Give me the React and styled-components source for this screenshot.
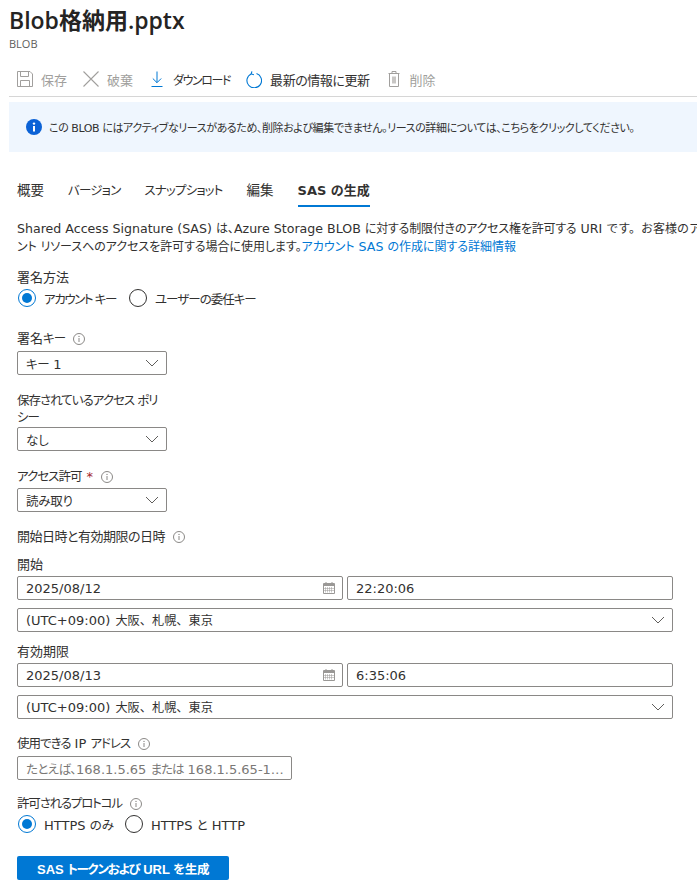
import React from "react";
import styled, { createGlobalStyle } from "styled-components";

const GlobalStyle = createGlobalStyle`
  html, body {
    margin: 0;
    padding: 0;
    background: #fff;
    overflow: hidden;
  }
  body {
    font-family: "DejaVu Sans", "Noto Sans CJK JP", sans-serif;
    font-size: 13px;
    font-feature-settings: "palt";
    color: #323130;
  }
`;

const Page = styled.div`
  width: 697px;
  height: 890px;
  overflow: hidden;
`;

const Header = styled.header`
  padding: 3px 0 0 9px;
`;

const Title = styled.h1`
  margin: 0;
  font-family: "Open Sans", "Noto Sans CJK JP", sans-serif;
  font-size: 23px;
  font-weight: 600;
  line-height: 35px;
  color: #252423;
`;

const Subtitle = styled.div`
  font-family: "Open Sans", sans-serif;
  font-size: 11px;
  line-height: 12px;
  color: #605e5c;
`;

// narrow kana, the reference's UI font sets them much tighter than Noto
const Kana = styled.span`
  font-size: ${({ $size }) => $size || 12.5}px;
  letter-spacing: ${({ $s }) => ($s === undefined ? -1 : $s)}px;
  font-feature-settings: ${({ $full }) => ($full ? "normal" : "inherit")};
`;

const Toolbar = styled.div`
  box-sizing: border-box;
  display: flex;
  align-items: center;
  gap: 16px;
  height: 43px;
  margin: 4px 0 0 9px;
  padding: 8px 0 0 8px;
  border-bottom: 1px solid #d6d6d6;
`;

const ToolItem = styled.div`
  display: flex;
  align-items: center;
  gap: 8px;
  white-space: nowrap;
  font-size: 13px;
  letter-spacing: ${({ $s }) => $s || 0}px;
  color: ${({ $off }) => ($off ? "#a19f9d" : "#323130")};
  svg {
    display: block;
    flex: none;
  }
`;

const Banner = styled.div`
  display: flex;
  align-items: center;
  gap: 7px;
  height: 50px;
  margin: 5px 0 0 9px;
  padding-left: 17px;
  background: #eff6fe;
  font-size: 11px;
  letter-spacing: -0.42px;
  white-space: nowrap;
`;

const Tabs = styled.nav`
  display: flex;
  gap: 24px;
  margin: 28px 0 0 17px;
`;

const Tab = styled.div`
  height: 25px;
  line-height: 21px;
  font-size: ${({ $active }) => ($active ? 13 : 13.5)}px;
  font-weight: ${({ $active }) => ($active ? 700 : 400)};
  border-bottom: ${({ $active }) => ($active ? "2px solid #0078d4" : "2px solid transparent")};
`;

const Form = styled.main`
  padding-left: 17px;
`;

const Description = styled.p`
  height: 34px;
  margin: 13px 0 0;
  font-size: 12.6px;
  line-height: 17px;
  white-space: nowrap;
`;

const DocLink = styled.a`
  color: #0078d4;
  text-decoration: none;
`;

const Label = styled.div`
  display: flex;
  align-items: center;
  gap: 8px;
  margin-top: ${({ $top }) => $top}px;
  min-height: 17px;
  font-size: 13px;
  line-height: 17px;
  letter-spacing: ${({ $s }) => $s || 0}px;
`;

const LabelText = styled.span`
  white-space: pre-wrap;
`;

const Required = styled.span`
  color: #a4262c;
  margin-left: -3px;
`;

const RadioRow = styled.div`
  display: flex;
  align-items: center;
  gap: ${({ $gap }) => $gap || 12}px;
  height: 20px;
  margin-top: 2px;
`;

const RadioOption = styled.div`
  display: flex;
  align-items: center;
  gap: 8px;
  font-size: 13px;
  white-space: nowrap;
`;

const RadioMark = styled.span`
  box-sizing: border-box;
  flex: none;
  display: flex;
  align-items: center;
  justify-content: center;
  width: 18px;
  height: 18px;
  margin-left: 1px;
  border-radius: 50%;
  border: 1px solid ${({ $on }) => ($on ? "#0078d4" : "#323130")};
  &::after {
    content: "";
    display: ${({ $on }) => ($on ? "block" : "none")};
    width: 10px;
    height: 10px;
    border-radius: 50%;
    background: #0078d4;
  }
`;

const Box = styled.div`
  box-sizing: border-box;
  display: flex;
  align-items: center;
  justify-content: space-between;
  width: ${({ $w }) => ($w ? `${$w}px` : "656px")};
  flex: ${({ $grow }) => ($grow ? 1 : "none")};
  height: 24px;
  margin-top: ${({ $top }) => $top || 0}px;
  padding: 0 7px 0 8px;
  border: 1px solid #8a8886;
  border-radius: 2px;
  background: #fff;
  font-size: 13px;
  white-space: nowrap;
  color: ${({ $hint }) => ($hint ? "#7a7876" : "#323130")};
`;

const BoxText = styled.span`
  overflow: hidden;
  text-overflow: ellipsis;
`;

const ZoneName = styled.span`
  font-size: 12.2px;
  margin-left: 1px;
  font-feature-settings: normal;
`;

const DateRow = styled.div`
  display: flex;
  gap: 4px;
  width: 656px;
  margin-top: 3px;
`;

const PrimaryButton = styled.button`
  display: block;
  width: 212px;
  height: 24px;
  margin-top: 22px;
  padding: 0;
  border: 0;
  border-radius: 2px;
  background: #0078d4;
  color: #fff;
  font-family: "Liberation Sans", "Noto Sans CJK JP", sans-serif;
  font-feature-settings: "palt";
  font-size: 13px;
  font-weight: 700;
`;

const Chevron = () => (
  <svg width="14" height="8" viewBox="0 0 14 8" fill="none" stroke="#605e5c" strokeWidth="1">
    <path d="M1 1l6 6 6-6" />
  </svg>
);

const InfoHint = () => (
  <svg width="12" height="12" viewBox="0 0 12 12" fill="none">
    <circle cx="6" cy="6" r="5.5" stroke="#8a8886" />
    <path d="M6 5v4" stroke="#8a8886" />
    <circle cx="6" cy="3.4" r=".7" fill="#8a8886" />
  </svg>
);

const CalendarIcon = () => (
  <svg width="12" height="12" viewBox="0 0 12 12" fill="none" stroke="#9a9896">
    <path d="M.5 1.5h11v10H.5z" />
    <path d="M.5 2.5h11M.5 3.5h11" />
    <path d="M2.5 5v5.5M4.5 5v5.5M6.5 5v5.5M8.5 5v5.5M1 6.5h10M1 8.5h10" strokeOpacity=".5" />
    <path d="M3 0v2M9 0v2" />
  </svg>
);

const SaveIcon = () => (
  <svg width="16" height="16" viewBox="0 0 16 16" fill="none" stroke="#a19f9d">
    <path d="M.5.5h12.5l2.5 2.5v12.5H.5z" />
    <path d="M3.5.5v5h8v-5M3.5 15.5V9.5h9v6" />
  </svg>
);

const DiscardIcon = () => (
  <svg width="16" height="16" viewBox="0 0 16 16" fill="none" stroke="#a19f9d" strokeWidth="1.1">
    <path d="M.5.5l15 15M15.5.5l-15 15" />
  </svg>
);

const DownloadIcon = () => (
  <svg width="16" height="16" viewBox="0 0 16 16" fill="none" stroke="#0078d4">
    <path d="M8 .5v11M3.8 7.5L8 11.7l4.2-4.2M2.5 15.5h11" />
  </svg>
);

const RefreshIcon = () => (
  <svg width="16" height="17" viewBox="0 0 16 17" fill="none" stroke="#0078d4" strokeWidth="1.1">
    <path d="M5.2 2.9A7.3 7.3 0 1 0 10.5 2.6" />
    <path d="M5.9 .4L5.2 3l2.7.8" />
  </svg>
);

const TrashIcon = () => (
  <svg width="16" height="16" viewBox="0 0 16 16" fill="none" stroke="#a19f9d">
    <path d="M2.5 2.5h11M6 2.5V.5h4v2M3.5 2.5v13h9v-13" />
    <path d="M6 5.5h4v7H6z" fill="#c8c6c4" stroke="none" />
  </svg>
);

const BannerIcon = () => (
  <svg width="16" height="16" viewBox="0 0 16 16" style={{ flex: "none" }}>
    <circle cx="8" cy="8" r="8" fill="#0b62d6" />
    <rect x="7" y="7" width="2" height="5.5" fill="#fff" />
    <circle cx="8" cy="4.6" r="1.2" fill="#fff" />
  </svg>
);

const Select = ({ w, top, children }) => (
  <Box $w={w} $top={top}>
    <BoxText>{children}</BoxText>
    <Chevron />
  </Box>
);

const Radio = ({ on, children }) => (
  <RadioOption>
    <RadioMark $on={on} />
    <LabelText>{children}</LabelText>
  </RadioOption>
);

const DateBlock = ({ label, top, date, time }) => (
  <>
    <Label $top={top}>{label}</Label>
    <DateRow>
      <Box $grow>
        <BoxText>{date}</BoxText>
        <CalendarIcon />
      </Box>
      <Box $w={326}>
        <BoxText>{time}</BoxText>
      </Box>
    </DateRow>
    <Select top={8}>(UTC+09:00) <ZoneName>大阪、札幌、東京</ZoneName></Select>
  </>
);

export default function App() {
  return (
    <Page>
      <GlobalStyle />
      <Header>
        <Title>Blob格納用.pptx</Title>
        <Subtitle>BLOB</Subtitle>
      </Header>
      <Toolbar>
        <ToolItem $off><SaveIcon />保存</ToolItem>
        <ToolItem $off><DiscardIcon />破棄</ToolItem>
        <ToolItem><DownloadIcon /><Kana $size={12} $s={-1.4}>ダウンロード</Kana></ToolItem>
        <ToolItem $s={-0.45}><RefreshIcon />最新の情報に更新</ToolItem>
        <ToolItem $off><TrashIcon />削除</ToolItem>
      </Toolbar>
      <Banner>
        <BannerIcon />
        この BLOB にはアクティブなリースがあるため、削除および編集できません。リースの詳細については、こちらをクリックしてください。
      </Banner>
      <Tabs>
        <Tab>概要</Tab>
        <Tab><Kana $s={-0.8}>バージョン</Kana></Tab>
        <Tab><Kana $s={-0.85}>スナップショット</Kana></Tab>
        <Tab>編集</Tab>
        <Tab $active>SAS の生成</Tab>
      </Tabs>
      <Form>
        <Description>
          Shared Access Signature (SAS) <Kana $size={12} $s={0}>は、</Kana>Azure Storage BLOB <Kana $size={12} $s={-0.2}>に対する制限付きのアクセス権を許可する</Kana> URI <Kana $size={12} $s={0} $full>です。お客様のアカウ</Kana>
          <br />
          <Kana $size={12} $s={-0.05}>ント リソースへのアクセスを許可する場合に使用します。</Kana>
          <DocLink href="#"><Kana $size={12} $s={0}>アカウント</Kana> SAS <Kana $size={12} $s={0}>の作成に関する詳細情報</Kana></DocLink>
        </Description>

        <Label $top={15}>署名方法</Label>
        <RadioRow>
          <Radio on><Kana $s={-1.4}>アカウント キー</Kana></Radio>
          <Radio><Kana $s={-1}>ユーザーの委任キー</Kana></Radio>
        </RadioRow>

        <Label $top={22}><LabelText>署名<Kana>キー</Kana></LabelText> <InfoHint /></Label>
        <Select w={150} top={4}><Kana $s={-0.5}>キー</Kana> 1</Select>

        <Label $top={17}><LabelText><Kana>保存されているアクセス ポリ</Kana><br /><Kana>シー</Kana></LabelText></Label>
        <Select w={150} top={1}><Kana $s={0}>なし</Kana></Select>

        <Label $top={17}><LabelText><Kana>アクセス許可</Kana></LabelText> <Required>*</Required> <InfoHint /></Label>
        <Select w={150} top={3}><Kana $s={-0.2}>読み取り</Kana></Select>

        <Label $top={16} $s={-0.5}><LabelText>開始日時と有効期限の日時</LabelText> <InfoHint /></Label>
        <DateBlock label="開始" top={11} date="2025/08/12" time="22:20:06" />
        <DateBlock label="有効期限" top={11} date="2025/08/13" time="6:35:06" />

        <Label $top={16}><LabelText><Kana>使用できる</Kana> IP <Kana>アドレス</Kana></LabelText> <InfoHint /></Label>
        <Box $w={275} $top={4} $hint>
          <BoxText><Kana $s={-0.6}>たとえば、</Kana>168.1.5.65 <Kana>または</Kana> 168.1.5.65-168.1.5.70</BoxText>
        </Box>

        <Label $top={15}><LabelText><Kana $s={-1.2}>許可されるプロトコル</Kana></LabelText> <InfoHint /></Label>
        <RadioRow $gap={10}>
          <Radio on>HTTPS <Kana $s={0}>のみ</Kana></Radio>
          <Radio>HTTPS <Kana $s={0}>と</Kana> HTTP</Radio>
        </RadioRow>

        <PrimaryButton>SAS <Kana $s={-1.2}>トークンおよび</Kana> URL <Kana $s={-0.4}>を生成</Kana></PrimaryButton>
      </Form>
    </Page>
  );
}
